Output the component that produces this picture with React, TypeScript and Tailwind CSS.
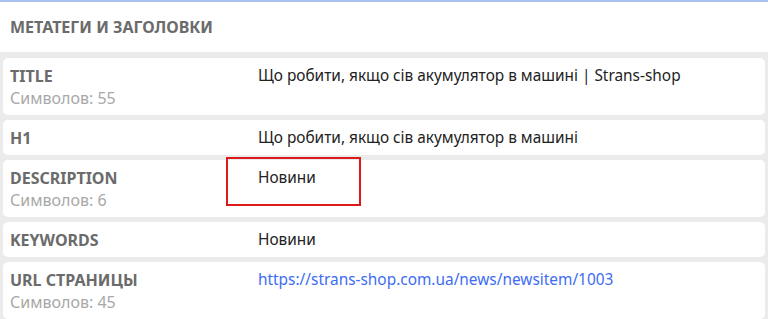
import React from "react";

type MetaRow = {
  label: string;
  value: string;
  count?: number;
  link?: boolean;
};

const rows: MetaRow[] = [
  { label: "TITLE", value: "Що робити, якщо сів акумулятор в машині | Strans-shop", count: 55 },
  { label: "H1", value: "Що робити, якщо сів акумулятор в машині" },
  { label: "DESCRIPTION", value: "Новини", count: 6 },
  { label: "KEYWORDS", value: "Новини" },
  {
    label: "URL СТРАНИЦЫ",
    value: "https://strans-shop.com.ua/news/newsitem/1003",
    count: 45,
    link: true,
  },
];

const MetaTags: React.FC = () => {
  return (
    <div className="w-[768px] h-[319px] overflow-hidden bg-[#ebebeb] font-['Segoe_UI','Noto_Sans',sans-serif] border-t-2 border-[#a9c3ee]">
      <div className="bg-white h-[50px] flex items-center px-[10px]">
        <h2 className="text-[16px] font-bold text-[#6b6b6b]">МЕТАТЕГИ И ЗАГОЛОВКИ</h2>
      </div>
      <div className="flex flex-col gap-[5px] px-[3px] pt-[6px]">
        {rows.map((row) => (
          <div key={row.label} className="relative bg-white rounded-[5px] flex pt-[8px] pb-[7px] px-[7px] leading-[20px]">
            <div className="w-[248px] shrink-0">
              <div className="text-[16px] font-bold text-[#6b6b6b]">{row.label}</div>
              {row.count !== undefined && (
                <div className="mt-[2px] text-[16px] text-[#a8a8a8]">Символов: {row.count}</div>
              )}
            </div>
            <div className="text-[15.4px]">
              {row.link ? (
                <a href={row.value} className="text-[#3d6cf2]">
                  {row.value}
                </a>
              ) : (
                <span className="text-[#222]">{row.value}</span>
              )}
            </div>
            {row.label === "DESCRIPTION" && (
              <div className="absolute left-[223px] top-[-3px] w-[135px] h-[49px] border-2 border-[#dd1a1a]" />
            )}
          </div>
        ))}
      </div>
    </div>
  );
};

export default function App() {
  return <MetaTags />;
}
